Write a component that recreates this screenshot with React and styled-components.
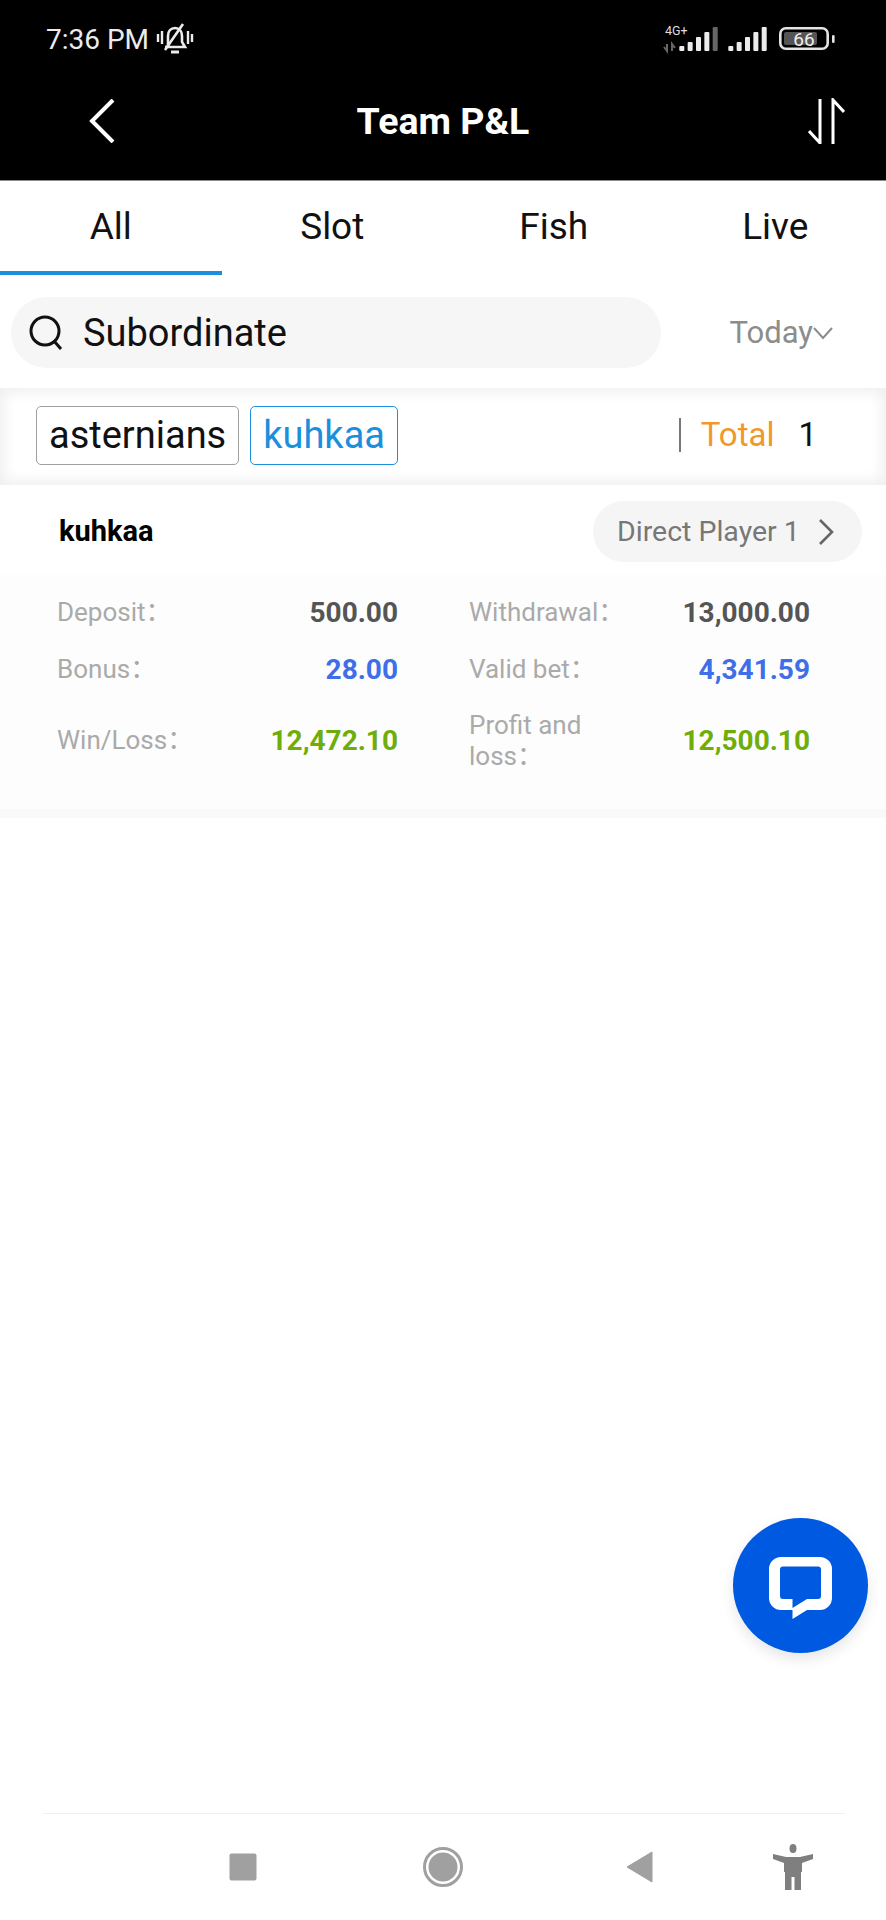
import React from 'react';
import styled, { createGlobalStyle } from 'styled-components';

const Global = createGlobalStyle`
  html, body { margin: 0; padding: 0; background: #fff; }
  * { box-sizing: border-box; }
  body { font-family: Roboto, "Noto Sans CJK SC", sans-serif; }
`;

const Page = styled.div`
  position: relative;
  width: 886px;
  height: 1920px;
  display: flex;
  flex-direction: column;
  background: #fff;
  overflow: hidden;
`;

const Top = styled.header`
  height: 181px;
  background: #000;
  color: #fff;
  display: flex;
  flex-direction: column;
  border-bottom: 1px solid #8a8a8a;
`;

const StatusBar = styled.div`
  height: 78px;
  padding: 0 51px 0 46px;
  display: flex;
  align-items: center;
  justify-content: space-between;
`;

const StatusGroup = styled.div`
  display: flex;
  align-items: center;
  gap: 7px;
`;

const Time = styled.span`
  font-size: 28px;
  color: #ececec;
`;

const NavRow = styled.div`
  flex: 1;
  padding: 0 41px 17px 89px;
  display: grid;
  grid-template-columns: 1fr auto 1fr;
  align-items: center;
`;

const NavEnd = styled.div`
  display: flex;
  justify-content: ${p => (p.$right ? 'flex-end' : 'flex-start')};
`;

const Title = styled.h1`
  margin: 0 0 0 -48px;
  font-size: 37.5px;
  font-weight: 700;
  color: #fff;
`;

const Tabs = styled.nav`
  display: grid;
  grid-template-columns: repeat(4, 1fr);
  height: 94px;
`;

const Tab = styled.div`
  display: flex;
  align-items: center;
  justify-content: center;
  font-size: 37px;
  color: #111;
  border-bottom: 4px solid ${p => (p.$active ? '#1b8fdc' : 'transparent')};
`;

const SearchRow = styled.div`
  display: flex;
  align-items: center;
  padding: 22px 53px 20px 11px;
  justify-content: space-between;
`;

const SearchPill = styled.div`
  width: 650px;
  height: 71px;
  border-radius: 36px;
  background: #f6f6f6;
  display: flex;
  align-items: center;
  gap: 18px;
  padding-left: 16px;
  font-size: 38px;
  color: #111;
`;

const DateSelect = styled.div`
  display: flex;
  align-items: center;
  font-size: 31px;
  color: #8c8c8c;
`;

const FilterBar = styled.div`
  height: 97px;
  background: #fff;
  box-shadow: inset 0 0 14px 4px #efefef;
  display: flex;
  align-items: center;
  justify-content: space-between;
  padding: 0 69px 0 36px;
`;

const Tags = styled.div`
  display: flex;
  gap: 11px;
  margin-bottom: 2px;
`;

const Tag = styled.div`
  height: 59px;
  padding: 0 12px 2px;
  display: flex;
  align-items: center;
  border-radius: 5px;
  background: #fff;
  font-size: 38px;
  color: ${p => (p.$active ? '#1b8fdc' : '#111')};
  border: 1.5px solid ${p => (p.$active ? '#1b8fdc' : '#a0a0a0')};
`;

const TotalBox = styled.div`
  display: flex;
  align-items: center;
  font-size: 33px;
  color: #111;
  margin-bottom: 4px;
`;

const Divider = styled.span`
  width: 2px;
  height: 34px;
  background: #777;
  margin-right: 20px;
`;

const TotalLabel = styled.span`
  color: #f0982a;
  margin-right: 24px;
`;

const Player = styled.section`
  display: flex;
  flex-direction: column;
  border-bottom: 9px solid #f9f9f9;
`;

const PlayerHead = styled.div`
  display: flex;
  align-items: center;
  justify-content: space-between;
  padding: 16px 24px 13px 59px;
`;

const PlayerName = styled.span`
  font-size: 29px;
  font-weight: 700;
  color: #000;
  margin-bottom: 2px;
`;

const DirectPill = styled.div`
  width: 269px;
  height: 61px;
  border-radius: 31px;
  background: #f5f5f5;
  display: flex;
  align-items: center;
  justify-content: space-between;
  padding: 0 28px 0 24px;
  font-size: 28.5px;
  color: #777;
`;

const Stats = styled.div`
  background: #fdfdfd;
  padding: 9px 76px 26px 57px;
  display: grid;
  grid-template-columns: 341px 341px;
  column-gap: 71px;
`;

const Stat = styled.div`
  min-height: ${p => (p.$tall ? '85px' : '57px')};
  display: flex;
  align-items: center;
  justify-content: space-between;
`;

const StatLabel = styled.span`
  font-size: 26px;
  line-height: 31px;
  color: #aaa;
  max-width: 145px;
`;

const StatValue = styled.span`
  font-size: 28px;
  font-weight: 700;
  color: ${p => p.$color};
`;

const Spacer = styled.div`
  flex: 1;
`;

const BottomNav = styled.footer`
  margin: 0 41px 0 43px;
  height: 107px;
  border-top: 1px solid #efefef;
  display: flex;
  align-items: center;
  padding-left: 186px;
`;

const NavSlot = styled.div`
  display: flex;
  margin-left: ${p => p.$gap}px;
`;

const Chat = styled.button`
  position: absolute;
  left: 733px;
  top: 1518px;
  width: 135px;
  height: 135px;
  border: 0;
  padding: 5px 0 0;
  border-radius: 50%;
  background: #0059e1;
  box-shadow: 0 6px 14px rgba(0, 0, 0, 0.1);
  display: flex;
  align-items: center;
  justify-content: center;
`;

const Bell = () => (
  <svg width="38" height="36" viewBox="0 0 38 36" fill="none" stroke="#ececec" strokeWidth="2.6">
    <path d="M12 25V15c0-5 3-8 7-8s7 3 7 8v6l3 5H9" />
    <path d="M15 31h8" strokeWidth="3" />
    <path d="M27 3L9 29" />
    <path d="M2 13v8M6 10v13M32 10v13M36 13v8" strokeWidth="2.4" />
  </svg>
);

const barHeights = [5, 9, 14, 19, 24];

const Signals = () => (
  <svg width="172" height="40" viewBox="0 -6 172 40" fill="none">
    <text x="2" y="10" fontSize="12.5" fill="#ddd" fontFamily="Roboto, sans-serif">4G+</text>
    <path d="M4 19v7l-3-4M9 26v-7l3 4" stroke="#666" strokeWidth="2" />
    {barHeights.map((h, i) => (
      <rect key={i} x={16.3 + i * 8.35} y={26 - h} width="5" height={h} rx="1" fill={i === 4 ? '#666' : '#ececec'} />
    ))}
    {barHeights.map((h, i) => (
      <rect key={i} x={65.3 + i * 8.35} y={26 - h} width="5" height={h} rx="1" fill="#ececec" />
    ))}
    <rect x="117.3" y="3.3" width="47.4" height="20.4" rx="5.5" stroke="#e4e4e4" strokeWidth="2.6" />
    <rect x="121" y="7" width="33" height="13" rx="2" fill="#555" />
    <text x="141" y="20.5" fontSize="19" fill="#eee" textAnchor="middle" fontFamily="Roboto, sans-serif">66</text>
    <rect x="169" y="10" width="2.6" height="8" rx="1.3" fill="#e4e4e4" />
  </svg>
);

const Back = () => (
  <svg width="26" height="44" viewBox="0 0 26 44" fill="none" stroke="#fff" strokeWidth="4">
    <path d="M24 1L3 22l21 21" />
  </svg>
);

const Sort = () => (
  <svg width="37" height="46" viewBox="0 0 37 46" fill="none" stroke="#fff" strokeWidth="3">
    <path d="M12 1v44L1 33" />
    <path d="M25 46V2l11 12" />
  </svg>
);

const Search = () => (
  <svg width="38" height="36" viewBox="0 0 38 36" fill="none" stroke="#111" strokeWidth="3">
    <circle cx="18" cy="16" r="14" />
    <path d="M27 26l7 8" />
  </svg>
);

const Caret = () => (
  <svg width="20" height="14" viewBox="0 0 20 14" fill="none" stroke="#8c8c8c" strokeWidth="2">
    <path d="M1 2l9 10 9-10" />
  </svg>
);

const Chevron = () => (
  <svg width="16" height="26" viewBox="0 0 16 26" fill="none" stroke="#666" strokeWidth="2.6">
    <path d="M2 1l12 12L2 25" />
  </svg>
);

const ChatIcon = () => (
  <svg width="63" height="62" viewBox="0 0 63 62">
    <path
      fill="#fff"
      fillRule="evenodd"
      d="M12 0H51a12 12 0 0 1 12 12V41a12 12 0 0 1-12 12H38L23.5 62V53H12A12 12 0 0 1 0 41V12A12 12 0 0 1 12 0zM14 9.5a3 3 0 0 0-3 3V39a3 3 0 0 0 3 3H23.5V51L38 42H49a3 3 0 0 0 3-3V12.5a3 3 0 0 0-3-3z"
    />
  </svg>
);

const NavSquare = () => (
  <svg width="28" height="28" viewBox="0 0 28 28"><rect x="0.5" y="0.5" width="27" height="27" rx="2" fill="#a0a0a0" /></svg>
);
const NavCircle = () => (
  <svg width="42" height="42" viewBox="0 0 42 42">
    <circle cx="21" cy="21" r="18.5" fill="none" stroke="#a0a0a0" strokeWidth="3" />
    <circle cx="21" cy="21" r="14.5" fill="#a0a0a0" />
  </svg>
);
const NavBack = () => (
  <svg width="28" height="32" viewBox="0 0 28 32"><path d="M1 16L26 1v30z" fill="#a0a0a0" stroke="#a0a0a0" strokeLinejoin="round" /></svg>
);
const NavPerson = () => (
  <svg width="40" height="46" viewBox="0 0 40 46" fill="#7f7f7f">
    <ellipse cx="20" cy="4.5" rx="3.5" ry="4.5" />
    <path d="M0 10l13 3h14l13-3v5l-11 4v9H11v-9L0 15z" />
    <path d="M12 26h16v20h-6.5V33h-3v13H12z" />
  </svg>
);

const stats = [
  { label: 'Deposit：', value: '500.00', color: '#555' },
  { label: 'Withdrawal：', value: '13,000.00', color: '#555' },
  { label: 'Bonus：', value: '28.00', color: '#3f6fe8' },
  { label: 'Valid bet：', value: '4,341.59', color: '#3f6fe8' },
  { label: 'Win/Loss：', value: '12,472.10', color: '#6fae08', tall: true },
  { label: 'Profit and loss：', value: '12,500.10', color: '#6fae08', tall: true },
];

export default function App() {
  return (
    <Page>
      <Global />
      <Top>
        <StatusBar>
          <StatusGroup>
            <Time>7:36 PM</Time>
            <Bell />
          </StatusGroup>
          <Signals />
        </StatusBar>
        <NavRow>
          <NavEnd><Back /></NavEnd>
          <Title>Team P&amp;L</Title>
          <NavEnd $right><Sort /></NavEnd>
        </NavRow>
      </Top>
      <Tabs>
        <Tab $active>All</Tab>
        <Tab>Slot</Tab>
        <Tab>Fish</Tab>
        <Tab>Live</Tab>
      </Tabs>
      <SearchRow>
        <SearchPill>
          <Search />
          Subordinate
        </SearchPill>
        <DateSelect>
          Today
          <Caret />
        </DateSelect>
      </SearchRow>
      <FilterBar>
        <Tags>
          <Tag>asternians</Tag>
          <Tag $active>kuhkaa</Tag>
        </Tags>
        <TotalBox>
          <Divider />
          <TotalLabel>Total</TotalLabel>
          1
        </TotalBox>
      </FilterBar>
      <Player>
        <PlayerHead>
          <PlayerName>kuhkaa</PlayerName>
          <DirectPill>
            Direct Player 1
            <Chevron />
          </DirectPill>
        </PlayerHead>
        <Stats>
          {stats.map(s => (
            <Stat key={s.label} $tall={s.tall}>
              <StatLabel>{s.label}</StatLabel>
              <StatValue $color={s.color}>{s.value}</StatValue>
            </Stat>
          ))}
        </Stats>
      </Player>
      <Spacer />
      <BottomNav>
        <NavSlot $gap={0}><NavSquare /></NavSlot>
        <NavSlot $gap={165}><NavCircle /></NavSlot>
        <NavSlot $gap={162}><NavBack /></NavSlot>
        <NavSlot $gap={119}><NavPerson /></NavSlot>
      </BottomNav>
      <Chat aria-label="Chat"><ChatIcon /></Chat>
    </Page>
  );
}
